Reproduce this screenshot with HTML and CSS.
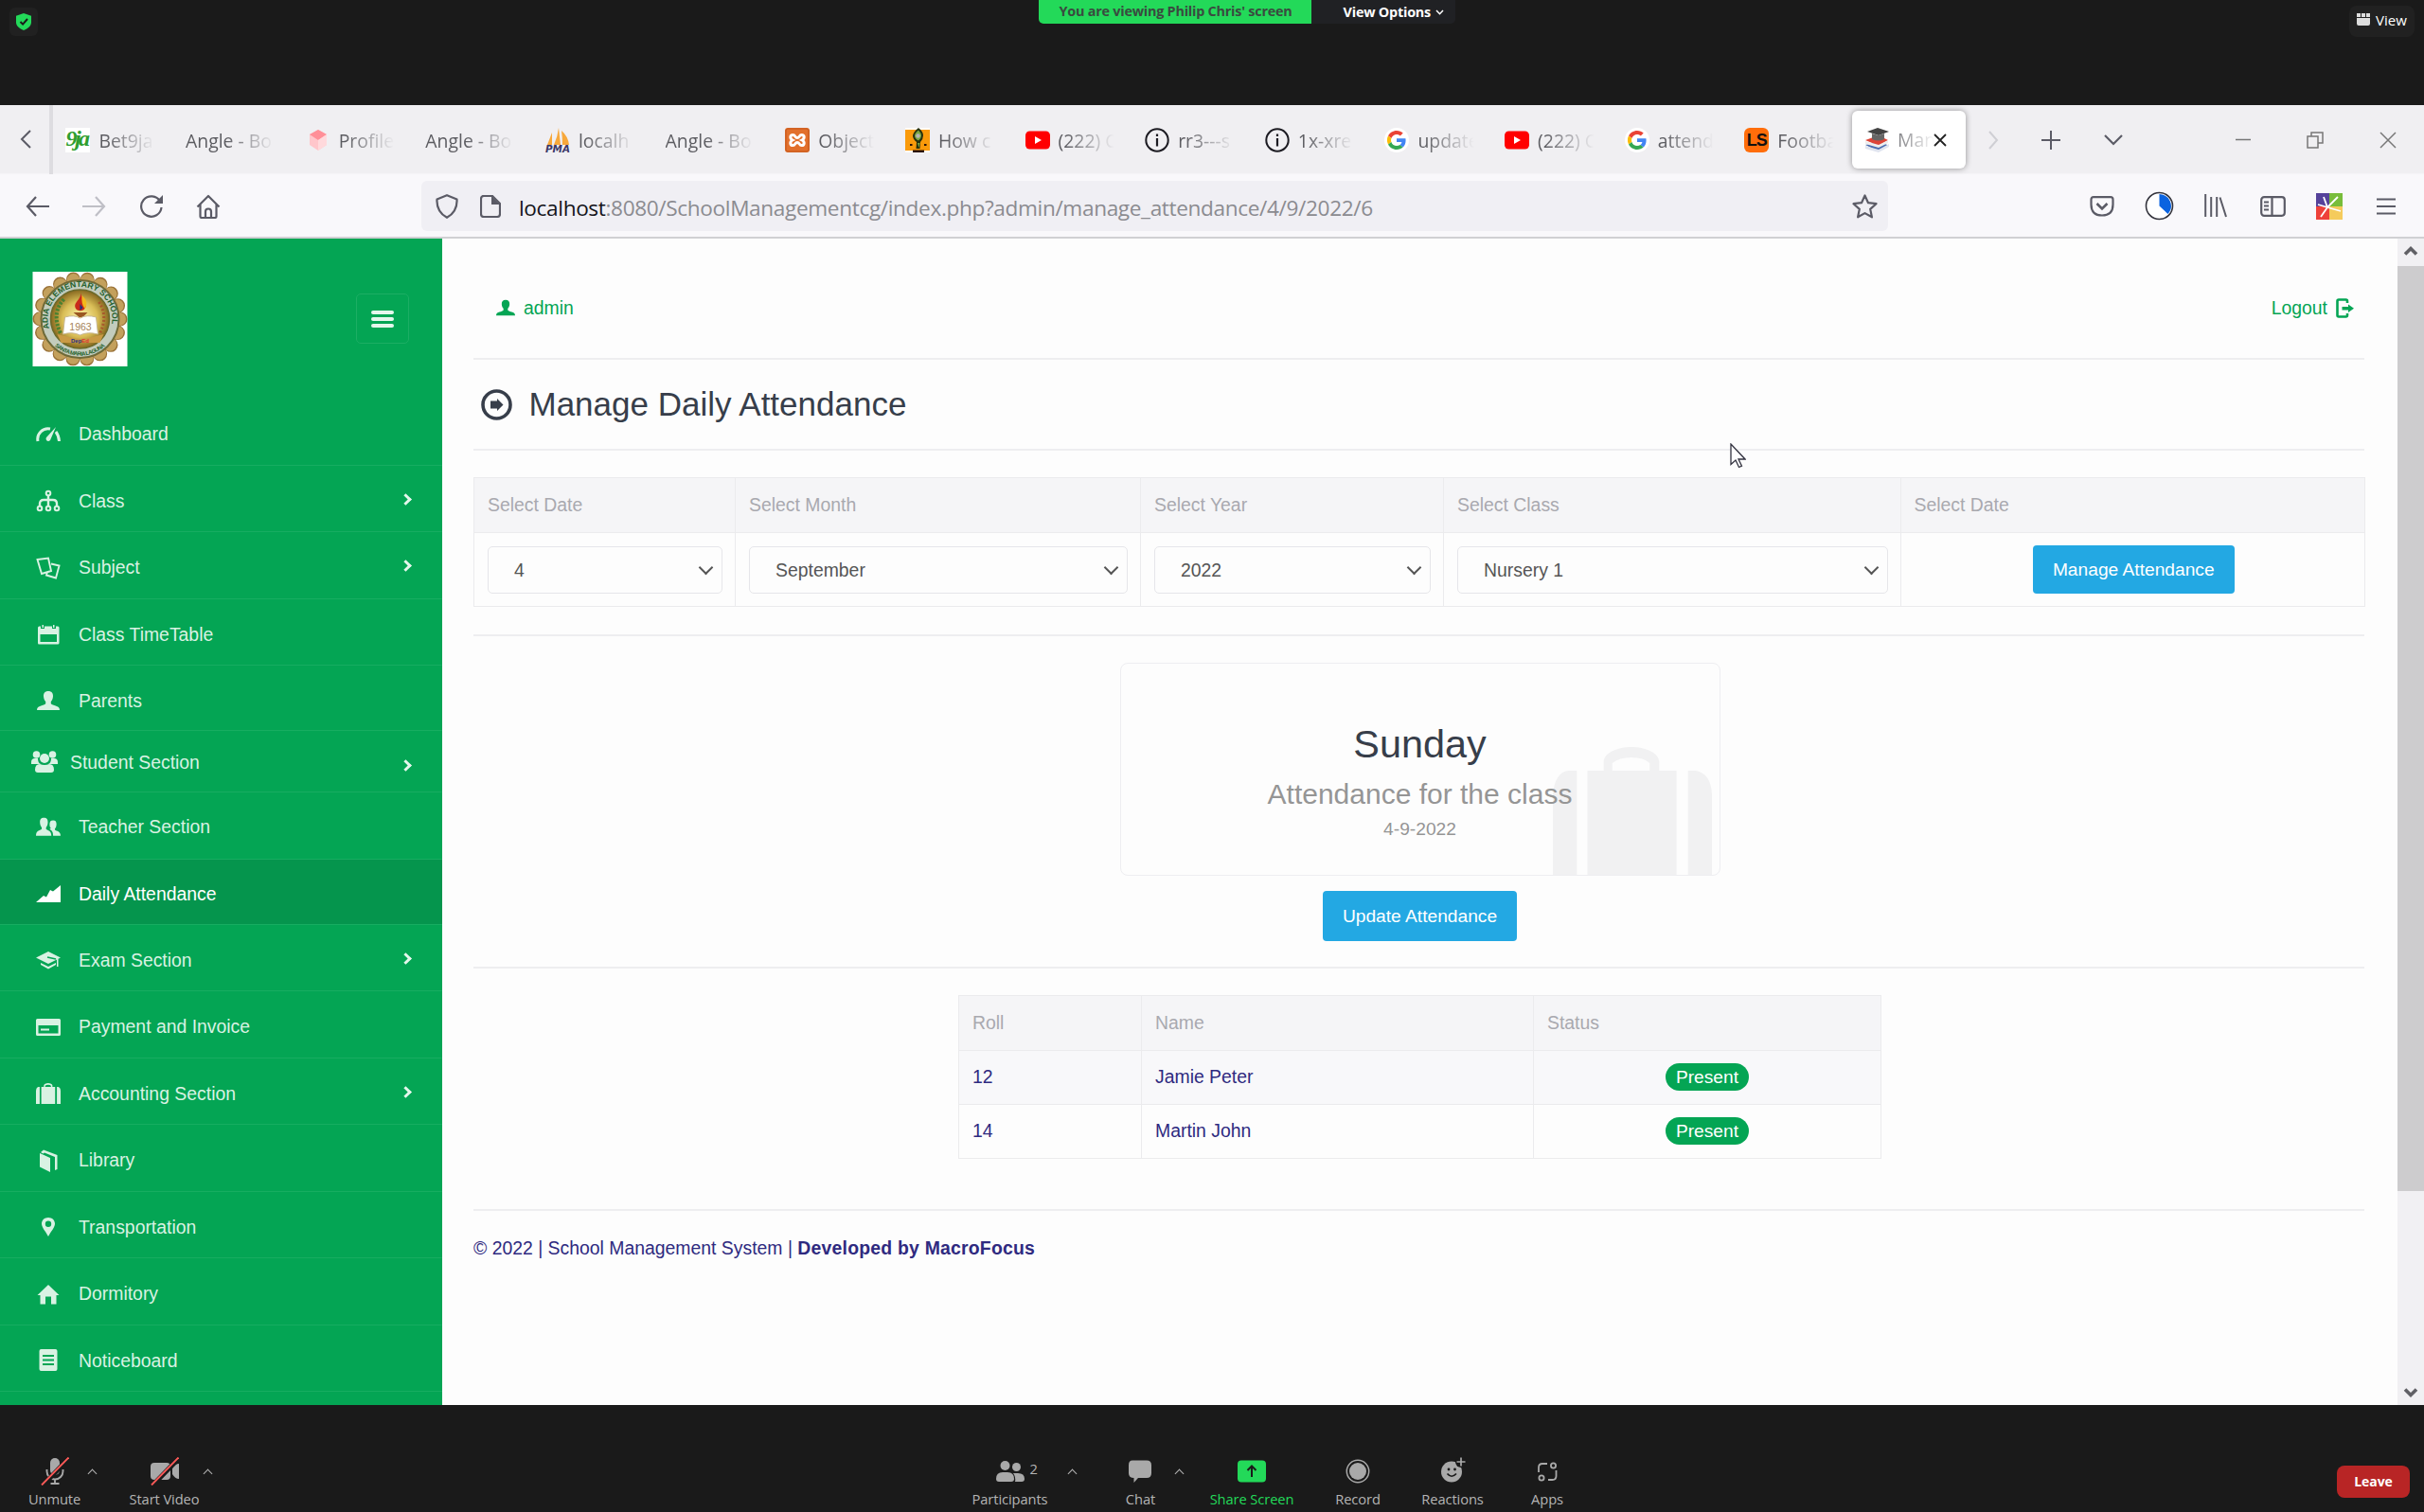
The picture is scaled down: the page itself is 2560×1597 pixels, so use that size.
FILE: index.html
```html
<!DOCTYPE html>
<html lang="en">
<head>
<meta charset="utf-8">
<title>Manage Daily Attendance</title>
<link rel="stylesheet" href="styles.css">
</head>
<body>
<svg class="defs" aria-hidden="true">
  <symbol id="google" viewBox="0 0 48 48"><path fill="#ea4335" d="M24 9.500c3.500 0 6.700 1.200 9.200 3.600l6.900-6.900C35.900 2.400 30.500 0 24 0 14.600 0 6.500 5.400 2.600 13.200l8 6.200C12.400 13.700 17.700 9.500 24 9.500z"/><path fill="#4285f4" d="M47 24.500c0-1.600-.2-3.100-.4-4.500H24v9h12.900c-.6 3-2.300 5.500-4.800 7.200l7.700 6C44.400 38 47 31.800 47 24.500z"/><path fill="#fbbc05" d="M10.500 28.600a14.500 14.500 0 0 1 0-9.200l-8-6.200a24 24 0 0 0 0 21.600z"/><path fill="#34a853" d="M24 48c6.500 0 11.900-2.100 15.900-5.800l-7.700-6c-2.200 1.500-4.900 2.300-8.200 2.300-6.300 0-11.600-4.200-13.500-9.900l-8 6.200C6.500 42.600 14.600 48 24 48z"/></symbol>
  <symbol id="youtube" viewBox="0 0 26 26"><rect y="3.500" width="26" height="19" rx="4.500" fill="#f00"/><path d="M10 9v8l7-4z" fill="#fff"/></symbol>
  <symbol id="info" viewBox="0 0 26 26"><circle cx="13" cy="13" r="11.700" fill="none" stroke="#1c1b22" stroke-width="2"/><path d="M13 11v8.500M13 6.500v2.600" stroke="#1c1b22" stroke-width="2.200"/></symbol>
  <symbol id="user" viewBox="0 0 24 24"><path d="M12 2c3.500 0 5.200 2.100 5 5.500-.2 2.600-1 4.500-2.200 5.500v2.200c1 1 3 1.500 5 2.300 2.600 1 4.200 1.700 4.200 4.500H0c0-2.800 1.600-3.500 4.200-4.500 2-.8 4-1.300 5-2.300V13C8 12 7.200 10.100 7 7.500 6.800 4.100 8.500 2 12 2z"/></symbol>
  <symbol id="bag" viewBox="0 0 166 135" preserveAspectRatio="none"><path d="M0 135V50Q2 27 16 25h9v110zM36 135V25h17V16C53 6 68 0 82 0s29 6 29 16v9h18v110zM62 25h39v-8q-6-6-19-6t-20 6zM141 25h8q16 3 17 25v85h-25z" fill-rule="evenodd"/></symbol>
</svg>

<header class="zoom-top">
  <span class="secure"><svg width="16" height="18" viewBox="0 0 16 18"><path d="M8 0l8 2.800v6.700c0 4-3.500 6.800-8 8.500-4.500-1.700-8-4.500-8-8.500V2.800z" fill="#23d959"/><path d="M4.500 9l2.600 2.600L12 6" fill="none" stroke="#1a1a1a" stroke-width="2"/></svg></span>
  <div class="share-bar">
    <span class="viewing">You are viewing Philip Chris' screen</span>
    <span class="options">View Options <svg width="9" height="6" viewBox="0 0 9 6"><path d="M1 1l3.500 3.700L8 1" fill="none" stroke="#fff" stroke-width="1.500"/></svg></span>
  </div>
  <span class="view-btn"><svg width="14" height="13" viewBox="0 0 14 13" fill="#ddd"><path d="M0 0h4v4H0zM5 0h4v4H5zM10 0h4v4h-4zM0 5h14v6q0 2-2 2H2q-2 0-2-2z"/></svg>View</span>
</header>

<section class="browser">
  <nav class="tabs">
    <span class="scroll-left"><svg width="14" height="22" viewBox="0 0 14 22"><path d="M12 2L3 11l9 9" fill="none" stroke="#5b5b66" stroke-width="2"/></svg></span>
    <div class="tab"><span class="ico nineja">9ja</span><span class="label">Bet9ja</span></div>
    <div class="tab"><span class="label">Angle - Bo</span></div>
    <div class="tab"><svg class="ico" viewBox="0 0 26 26"><path d="M13 2l9 5v11l-9 6-9-6V7z" fill="#ffc6cb"/><path d="M13 2l9 5-9 6-9-6z" fill="#ff8f98"/><path d="M13 13l9-6v11l-9 6z" fill="#ffd9dc"/></svg><span class="label">Profile</span></div>
    <div class="tab"><span class="label">Angle - Bo</span></div>
    <div class="tab"><svg class="ico pma" viewBox="0 0 26 26"><path d="M7 5L2 18h5zM14 0q-1 9-5 18h7zM17 3q7 6 8 15h-7q0-8-1-15z" fill="#f7a83b"/><text x="0" y="26" textLength="26" lengthAdjust="spacingAndGlyphs" class="pma-text">PMA</text></svg><span class="label">localh</span></div>
    <div class="tab"><span class="label">Angle - Bo</span></div>
    <div class="tab"><svg class="ico" viewBox="0 0 26 26"><rect width="26" height="26" rx="3" fill="#e2702c"/><rect x="1" y="1" width="24" height="24" rx="2" fill="none" stroke="#c4571c"/><path d="M8.500 7.500c-3.500 0-3.500 4-.5 5.500-3 1.500-3 5.500.5 5.500 2.500 0 2-3 4.500-3s2 3 4.500 3c3.500 0 3.500-4 .5-5.500 3-1.500 3-5.500-.5-5.500-2.500 0-2 3-4.500 3s-2-3-4.500-3z" fill="none" stroke="#fff" stroke-width="3"/></svg><span class="label">Object</span></div>
    <div class="tab"><svg class="ico" viewBox="0 0 26 26"><path d="M0 0h26v26H0z" fill="#fff"/><path d="M0 2h26v22H0z" fill="#fa9a0a"/><path d="M14 0q5 4 5 8t-3 7l-.5 7h-4l.5-7q-4-3-4-7 1-4 6-8z" fill="#26300f"/><path d="M14 2.500q3 3 3 6t-3 5q-4-2-4-5t4-6zM13 16h2.500l-1 5z" fill="#7aa845"/><circle cx="13.500" cy="8.500" r="2.200" fill="#b5b5b5"/><path d="M5 17h2.500v2H5zM20 17h2.500v2H20zM8 23.500h12V26H8z" fill="#2a1208"/></svg><span class="label">How c</span></div>
    <div class="tab"><svg class="ico"><use href="#youtube"/></svg><span class="label">(222) C</span></div>
    <div class="tab"><svg class="ico"><use href="#info"/></svg><span class="label">rr3---s</span></div>
    <div class="tab"><svg class="ico"><use href="#info"/></svg><span class="label">1x-xre</span></div>
    <div class="tab"><span class="ico disc"><svg width="20" height="20"><use href="#google"/></svg></span><span class="label">update</span></div>
    <div class="tab"><svg class="ico"><use href="#youtube"/></svg><span class="label">(222) C</span></div>
    <div class="tab"><span class="ico disc"><svg width="20" height="20"><use href="#google"/></svg></span><span class="label">attend</span></div>
    <div class="tab"><span class="ico livescore">LS</span><span class="label">Footba</span></div>
    <div class="tab active"><svg class="ico" viewBox="0 0 26 26"><path d="M1 18l15-4 10 5-11 6z" fill="#4a6db0"/><path d="M1 19l14 4 11-6v3l-11 6L1 22z" fill="#dfe4ef"/><path d="M1 13l14-5 10 5-10 6z" fill="#dd4438"/><path d="M1 14l14 4 10-5v3l-10 5-14-4z" fill="#eee"/><path d="M3 4l11-4 12 4-11 4z" fill="#444"/><path d="M8 6v6q7 3 13 0V6l-6 2z" fill="#666"/></svg><span class="label">Man</span><svg class="close" width="14" height="14" viewBox="0 0 14 14"><path d="M1 1l12 12M13 1L1 13" stroke="#222" stroke-width="1.800"/></svg></div>
    <span class="tab-tools">
      <svg width="12" height="20" viewBox="0 0 12 20"><path d="M2 1l8 9-8 9" fill="none" stroke="#cfcfd4" stroke-width="2"/></svg>
      <svg width="20" height="20" viewBox="0 0 20 20"><path d="M10 0v20M0 10h20" stroke="#5b5b66" stroke-width="2"/></svg>
      <svg width="22" height="14" viewBox="0 0 22 14"><path d="M2 2l9 9 9-9" fill="none" stroke="#5b5b66" stroke-width="2.200"/></svg>
    </span>
    <span class="win-tools">
      <svg width="16" height="18" viewBox="0 0 16 18"><path d="M0 8.500h16" stroke="#777" stroke-width="1.500"/></svg>
      <svg width="18" height="18" viewBox="0 0 18 18" fill="none" stroke="#777" stroke-width="1.500"><path d="M1 5h11v12H1zM5 5V1h12v11h-5"/></svg>
      <svg width="18" height="18" viewBox="0 0 18 18"><path d="M1 1l16 16M17 1L1 17" stroke="#777" stroke-width="1.500"/></svg>
    </span>
  </nav>

  <div class="toolbar">
    <div class="nav-icons">
      <svg width="25" height="22" viewBox="0 0 25 22"><path d="M25 11H2M11 1L2 11l9 10" fill="none" stroke="#5b5b66" stroke-width="2.200"/></svg>
      <svg width="25" height="22" viewBox="0 0 25 22"><path d="M0 11h23M14 1l9 10-9 10" fill="none" stroke="#bfbfc6" stroke-width="2.200"/></svg>
      <svg width="25" height="26" viewBox="0 0 25 26"><path d="M22 7.500A10.700 10.700 0 1 0 23.500 14" fill="none" stroke="#5b5b66" stroke-width="2.200"/><path d="M25 1v9h-9z" fill="#5b5b66"/></svg>
      <svg width="26" height="26" viewBox="0 0 26 26" fill="none" stroke="#5b5b66" stroke-width="2.200" stroke-linejoin="round"><path d="M1.500 13.500L13 2l11.500 11.500M4.500 11v12.500q0 1.500 1.500 1.500h14q1.500 0 1.500-1.500V11M10 25v-6.500q0-3 3-3t3 3V25"/></svg>
    </div>
    <div class="url">
      <svg width="24" height="26" viewBox="0 0 24 26"><path d="M12 1.200l10.500 4.300c.5 8-3 15-10.500 19.300C4.500 20.500 1 13.500 1.500 5.500z" fill="none" stroke="#5b5b66" stroke-width="2.200" stroke-linejoin="round"/></svg>
      <svg width="22" height="24" viewBox="0 0 22 24"><path d="M4 1h9l8 8v11q0 3-3 3H4q-3 0-3-3V4q0-3 3-3z" fill="none" stroke="#5b5b66" stroke-width="2.200"/><path d="M12 1v9h9z" fill="#5b5b66"/></svg>
      <span class="address"><b>localhost</b>:8080/SchoolManagementcg/index.php?admin/manage_attendance/4/9/2022/6</span>
      <svg class="star" width="27" height="26" viewBox="0 0 27 26"><path d="M13.500 1.500l3.500 7.700 8.500 1-6.300 5.700 1.700 8.400-7.400-4.200-7.400 4.200 1.700-8.400L1.500 10.200l8.500-1z" fill="none" stroke="#5b5b66" stroke-width="2.200" stroke-linejoin="round"/></svg>
    </div>
    <div class="ext-icons">
      <svg width="26" height="22" viewBox="0 0 26 22" fill="none" stroke="#5b5b66" stroke-width="2.200"><path d="M4 1.200h18q2.500 0 2.500 2.500V9q0 11.500-11.500 11.500T1.500 9V3.700q0-2.500 2.500-2.500z"/><path d="M7.500 8l5.500 5.500L18.500 8" stroke-width="2.600"/></svg>
      <svg width="31" height="31" viewBox="0 0 31 31"><circle cx="15.500" cy="15.500" r="14" fill="#fff" stroke="#33333c" stroke-width="1.600"/><path d="M15.500 3a12.500 12.500 0 0 1 9 21l-9-8.500z" fill="#0a63e0"/></svg>
      <svg width="24" height="25" viewBox="0 0 24 25"><path d="M1.200 0v24M7.200 3v21M13.200 3v21M16.500 3.500L23 24" fill="none" stroke="#5b5b66" stroke-width="2"/></svg>
      <svg width="27" height="22" viewBox="0 0 27 22" fill="none" stroke="#5b5b66" stroke-width="2.200"><rect x="1.200" y="1.200" width="24.600" height="19.600" rx="3"/><path d="M12.500 1v20M4 6.500h5M4 10.500h5M4 14.500h5"/></svg>
      <svg width="28" height="28" viewBox="0 0 28 28"><path d="M0 0h14v14H0z" fill="#55429a"/><path d="M14 0h14v14H14z" fill="#78bd3a"/><path d="M0 14h14v14H0z" fill="#ee413a"/><path d="M14 14h14v14H14z" fill="#f5cb5c"/><path d="M12 15L23 4M12 15L8 4M12 15L2 12M12 15l14 4M12 15L5 25" stroke="#fff" stroke-width="1.800"/></svg>
      <svg width="20" height="18" viewBox="0 0 20 18"><path d="M0 1.500h20M0 9h20M0 16.500h20" stroke="#5b5b66" stroke-width="2.200"/></svg>
    </div>
  </div>

  <div class="page">
    <aside class="sidebar">
      <div class="brand">
        <svg class="logo" viewBox="0 0 100 100">
          <defs>
            <radialGradient id="gold"><stop offset="0" stop-color="#fff6ae"/><stop offset=".6" stop-color="#d9bd56"/><stop offset="1" stop-color="#86671f"/></radialGradient>
            <path id="arc-top" d="M17.500 60A34 34 0 1 1 82.500 60"/>
            <path id="arc-bottom" d="M22 77A39.500 39.500 0 0 0 78 77"/>
          </defs>
          <path d="M0 0h100v100H0z" fill="#fff"/>
          <circle cx="50" cy="50" r="42.500" fill="none" stroke="#9a7238" stroke-width="15" stroke-linecap="round" stroke-dasharray="0 14.835"/>
          <circle cx="50" cy="50" r="41.500" fill="none" stroke="#c3a05c" stroke-width="14" stroke-linecap="round" stroke-dasharray="0 14.486"/>
          <circle cx="50" cy="50" r="41" fill="#c3ccbd" stroke="#6f6a38" stroke-width="2"/>
          <circle cx="50" cy="50" r="31" fill="url(#gold)" stroke="#6b6a2b" stroke-width="1.500"/>
          <text class="seal"><textPath href="#arc-top" textLength="122" lengthAdjust="spacingAndGlyphs">ADIA ELEMENTARY SCHOOL</textPath></text>
          <text class="seal small"><textPath href="#arc-bottom" startOffset="2" textLength="58">SANTA MARIA LAGUNA</textPath></text>
          <path d="M33 29q-14 15-3 37" fill="none" stroke="#4c8030" stroke-width="4" stroke-dasharray="2.500 1.500"/>
          <path d="M70 32q10 15 1 33" fill="none" stroke="#a75a2c" stroke-width="3" stroke-dasharray="2 2"/>
          <path d="M51 22c0 6 6 8 5 15-1 5-9 6-11 1-2-6 6-8 6-16z" fill="#c92a1b"/><path d="M52 25q8 7 3 14-4-5-3-14z" fill="#f3b81c"/><path d="M50 34l3 4-3 3z" fill="#20307e"/>
          <path d="M43 43h15l-5 5h-4z" fill="#9a5722"/>
          <path d="M34 48q10-3 16 1 7-4 17-1l2 18q-11-3-19 1-8-4-18-1z" fill="#fff" stroke="#c6b58e"/>
          <text x="50.500" y="62" text-anchor="middle" class="year">1963</text>
          <path d="M26 66l8 2q16 6 33 0l8-2-4 9H30z" fill="#c99a45"/>
          <text x="50" y="74.500" text-anchor="middle" class="deped">Dep<tspan fill="#d33">Ed</tspan></text>
        </svg>
        <span class="menu-btn"><i></i><i></i><i></i></span>
      </div>
      <ul class="menu">
        <li><svg viewBox="0 0 26 24"><path d="M2 19A11 11 0 0 1 15 6M21 9q3 4 3.500 10" fill="none" stroke="currentColor" stroke-width="3"/><path d="M21 4l-6 14q-2 2-4 0-1-2 0-3z"/></svg><span>Dashboard</span></li>
        <li><svg viewBox="0 0 26 24" fill="none" stroke="currentColor" stroke-width="2"><circle cx="13" cy="4" r="2.300"/><circle cx="4" cy="20" r="2.300"/><circle cx="13" cy="20" r="2.300"/><circle cx="22" cy="20" r="2.300"/><path d="M13 6v12M4 18v-3q0-4 4-4h10q4 0 4 4v3" stroke-width="2.400"/></svg><span>Class</span><b></b></li>
        <li><svg viewBox="0 0 26 24" fill="none" stroke="currentColor" stroke-width="1.900"><path d="M1.500 3L13 1.500 16 15 6 18zM16 7.500l8.500 2L21 22.500l-10-3 1-3"/></svg><span>Subject</span><b></b></li>
        <li><svg viewBox="0 0 26 24"><path d="M2 5q0-1.500 1.500-1.500H5V6h4V3.500h8V6h4V3.500h2q1.500 0 1.500 1.500v16q0 1.500-1.500 1.500h-20Q2 22.500 2 21zM4.500 12v8h17.500v-8zM6.500 2h1.500v3H6.500zM18 2h1.500v3H18z" fill-rule="evenodd"/></svg><span>Class TimeTable</span></li>
        <li class="parents"><svg viewBox="0 0 24 24"><use href="#user"/></svg><span>Parents</span></li>
        <li class="student"><svg viewBox="0 0 28 24"><circle cx="5.500" cy="4" r="3.800"/><circle cx="22.500" cy="4" r="3.800"/><circle cx="14" cy="8" r="5"/><path d="M0 12q0-4 4-4h3q0 5 3 6H0zM28 12q0-4-4-4h-3q0 5-3 6h10zM4 20q0-6 5-6 5 2 10 0 5 0 5 6 0 3-3 3H7q-3 0-3-3z"/></svg><span>Student Section</span><b></b></li>
        <li class="teacher"><svg viewBox="0 0 28 24"><path d="M9 2c3.500 0 4.500 2 4.500 5s-1 5-2 6v2c2 2 6 1.500 6 7.500H0c0-6 4-5.500 6.500-7.500v-2c-1-1-2-3-2-6s1-5 4.500-5zM19.500 5c3 0 3.800 1.800 3.800 4.300s-.8 4.200-1.800 5v1.500c2 1.500 6.500 1.500 6.500 6.700h-8.500c0-5-2-6-4-7.500l1.500-1c-1-1-1.500-2.300-1.500-4.700C15.500 6.800 16.500 5 19.500 5z"/></svg><span>Teacher Section</span></li>
        <li class="current"><svg viewBox="0 0 26 24"><path d="M0 21l8-7 3 1.500L15 8l3 1.500L26 3v18z"/></svg><span>Daily Attendance</span></li>
        <li><svg viewBox="0 0 26 24"><path d="M13 3l13 6.500-2.500 1.200V19H22v-7.500L13 16 0 9.500z"/><path d="M5 15l8 4 8-4v2l-8 4.500L5 17z"/><path d="M12 9l9 2" stroke="#04a554" stroke-width="1.500"/></svg><span>Exam Section</span><b></b></li>
        <li><svg viewBox="0 0 26 24"><path d="M1.500 3h23Q26 3 26 4.500v15q0 1.500-1.500 1.500h-23Q0 21 0 19.500v-15Q0 3 1.500 3zM2.500 10v8.500h21V10zM5 13.500h9v2H5z" fill-rule="evenodd"/></svg><span>Payment and Invoice</span></li>
        <li><svg class="bag-sm"><use href="#bag"/></svg><span>Accounting Section</span><b></b></li>
        <li><svg viewBox="0 0 26 24"><path d="M4 4l11 5v15L4 18.500zM5 3l3-2.500L22.500 6v15L20 22V8L9 3.500 7.500 4.500z"/></svg><span>Library</span></li>
        <li><svg viewBox="0 0 26 24"><path d="M13 2c4 0 7 2.800 7 6.500 0 4-4.500 8.500-7 13.500-2.500-5-7-9.500-7-13.500C6 4.800 9 2 13 2zm0 3.500a3.200 3.200 0 1 0 0 6.400 3.200 3.200 0 0 0 0-6.400z" fill-rule="evenodd"/></svg><span>Transportation</span></li>
        <li><svg viewBox="0 0 26 24"><path d="M13 2l11.500 11h-3v9.500H16v-8h-6v8H4.500V13h-3z"/></svg><span>Dormitory</span></li>
        <li><svg viewBox="0 0 26 24"><path d="M5.500 0h15q2 0 2 2v19q0 2-2 2h-15q-2 0-2-2V2q0-2 2-2zM7 6v2h12V6zM7 10.500v2h12v-2zM7 15v2h12v-2z" fill-rule="evenodd"/></svg><span>Noticeboard</span></li>
      </ul>
    </aside>

    <main>
      <div class="topline">
        <span class="admin"><svg width="20" height="20" viewBox="0 0 24 24"><use href="#user"/></svg>admin</span>
        <span class="logout">Logout<svg width="19" height="21" viewBox="0 0 19 21"><path d="M12 5V3q0-1.500-1.500-1.500H3Q1.500 1.500 1.500 3v15q0 1.500 1.500 1.500h7.500Q12 19.500 12 18v-2" fill="none" stroke="#04a554" stroke-width="2.600"/><path d="M6.500 9h6.500V6.500l6 4.200-6 4.300v-2.500H6.500z" fill="#04a554"/></svg></span>
      </div>
      <h1><svg width="33" height="33" viewBox="0 0 33 33"><circle cx="16.500" cy="16.500" r="14.500" fill="none" stroke="#373e4a" stroke-width="3.600"/><path d="M10 12.500h7V10l6.500 6.500L17 23v-2.500h-7z" fill="#373e4a"/></svg>Manage Daily Attendance</h1>

      <table class="filters">
        <colgroup><col class="c1"><col class="c2"><col class="c3"><col class="c4"><col></colgroup>
        <tr><th>Select Date</th><th>Select Month</th><th>Select Year</th><th>Select Class</th><th>Select Date</th></tr>
        <tr>
          <td><div class="select">4</div></td>
          <td><div class="select">September</div></td>
          <td><div class="select">2022</div></td>
          <td><div class="select">Nursery 1</div></td>
          <td class="center"><span class="btn">Manage Attendance</span></td>
        </tr>
      </table>

      <section class="summary">
        <div class="tile">
          <svg class="tile-icon" width="168" height="135"><use href="#bag"/></svg>
          <h2>Sunday</h2>
          <h3>Attendance for the class</h3>
          <p>4-9-2022</p>
        </div>
        <span class="btn">Update Attendance</span>
      </section>

      <table class="roll">
        <colgroup><col class="r1"><col class="r2"><col></colgroup>
        <tr><th>Roll</th><th>Name</th><th>Status</th></tr>
        <tr class="odd"><td>12</td><td>Jamie Peter</td><td class="center"><span class="badge">Present</span></td></tr>
        <tr><td>14</td><td>Martin John</td><td class="center"><span class="badge">Present</span></td></tr>
      </table>

      <footer>© 2022 | School Management System | <strong>Developed by MacroFocus</strong></footer>
    </main>

    <div class="scrollbar">
      <svg width="16" height="12" viewBox="0 0 16 12"><path d="M2 9.500l6-6 6 6" fill="none" stroke="#606065" stroke-width="3.600"/></svg>
      <span class="thumb"></span>
      <svg width="16" height="12" viewBox="0 0 16 12"><path d="M2 2.500l6 6 6-6" fill="none" stroke="#606065" stroke-width="3.600"/></svg>
    </div>

    <svg class="cursor" width="17" height="27" viewBox="0 0 17 27"><path d="M1 1v21.500l5-4.500 3.500 7.500 3-1.400L9 17h7z" fill="#fff" stroke="#333340" stroke-width="1.300"/></svg>
  </div>
</section>

<footer class="zoom-bar">
  <div class="tool unmute"><svg width="30" height="30" viewBox="0 0 30 30"><rect x="10" y="1" width="10" height="18" rx="5" fill="#a9a9a9"/><path d="M6.500 13v2a8.500 8.500 0 0 0 17 0v-2M15 23.500V28M10.500 28h9" fill="none" stroke="#a9a9a9" stroke-width="1.900"/><path d="M2 30L31 0" stroke="#1a1a1a" stroke-width="5"/><path d="M1 29.500L29.500 .5" stroke="#ff5a58" stroke-width="1.900"/></svg>Unmute</div>
  <span class="caret c-a"></span>
  <div class="tool video"><svg width="30" height="30" viewBox="0 0 30 30"><rect y="6" width="21" height="18" rx="4" fill="#a9a9a9"/><path d="M23 12q3-5 7-5v16q-4 0-7-5z" fill="#a9a9a9"/><path d="M2 30L31 0" stroke="#1a1a1a" stroke-width="5"/><path d="M1 29.500L29.500 .5" stroke="#ff5a58" stroke-width="1.900"/></svg>Start Video</div>
  <span class="caret c-b"></span>
  <div class="tool participants"><svg width="30" height="30" viewBox="0 0 30 30" fill="#a9a9a9"><circle cx="9.500" cy="9" r="5"/><circle cx="21.500" cy="10.500" r="4.500"/><path d="M0 23q0-7 7-7h5q7 0 7 7 0 3-3 3H3q-3 0-3-3zM18 17h5q7 0 7 6 0 3-3 3h-7q1-5-2-9z"/></svg><em>2</em>Participants</div>
  <span class="caret c-c"></span>
  <div class="tool chat"><svg width="30" height="30" viewBox="0 0 30 30"><path d="M6 3.500h15q5 0 5 5V17q0 5-5 5h-9l-4.500 5v-5Q2 22 2 17V8.500q0-5 4-5z" fill="#a9a9a9"/></svg>Chat</div>
  <span class="caret c-d"></span>
  <div class="tool share"><svg width="30" height="30" viewBox="0 0 30 30"><rect y="3.500" width="30" height="23" rx="4" fill="#23d959"/><path d="M15 21V10M10.500 14L15 9.500l4.500 4.500" fill="none" stroke="#1a1a1a" stroke-width="2"/></svg>Share Screen</div>
  <div class="tool record"><svg width="30" height="30" viewBox="0 0 30 30"><circle cx="15" cy="15" r="11.700" fill="none" stroke="#a9a9a9" stroke-width="1.500"/><circle cx="15" cy="15" r="9" fill="#a9a9a9"/></svg>Record</div>
  <div class="tool reactions"><svg width="30" height="30" viewBox="0 0 30 30"><circle cx="14" cy="15.500" r="11" fill="#a9a9a9"/><circle cx="24" cy="5" r="6" fill="#1a1a1a"/><path d="M24 .5v9M19.500 5h9" stroke="#a9a9a9" stroke-width="1.700"/><circle cx="11" cy="13" r="1.400" fill="#1a1a1a"/><circle cx="17.500" cy="13" r="1.400" fill="#1a1a1a"/><path d="M9.500 17.500q4.500 5.500 9.500 0" fill="none" stroke="#1a1a1a" stroke-width="1.700"/></svg>Reactions</div>
  <div class="tool apps"><svg width="30" height="30" viewBox="0 0 30 30" fill="none" stroke="#a9a9a9" stroke-width="1.800"><path d="M6 16v-5q0-4 4-4h5M24.500 14v6q0 4-4 4H16"/><circle cx="21.500" cy="9" r="2.600"/><circle cx="9" cy="22" r="2.600"/></svg>Apps</div>
  <span class="leave">Leave</span>
</footer>
</body>
</html>
```
FILE: styles.css
```css
* { box-sizing: border-box; }
body { margin: 0; width: 2560px; height: 1597px; overflow: hidden; background: #1a1a1a; font-family: "Open Sans", sans-serif; display: flex; flex-direction: column; }
svg { display: block; flex: none; }
.defs { position: absolute; width: 0; height: 0; }

/* meeting header */
.zoom-top { height: 111px; position: relative; display: flex; justify-content: space-between; align-items: flex-start; padding: 6px 10px; }
.secure { width: 30px; height: 30px; margin-top: 2px; border-radius: 6px; background: #212121; display: flex; align-items: center; justify-content: center; }
.share-bar { position: absolute; left: 1097px; top: 0; width: 440px; height: 25px; display: flex; border-radius: 0 0 5px 5px; overflow: hidden; font-size: 14.400px; font-weight: 700; line-height: 24px; letter-spacing: -.22px; white-space: nowrap; }
.viewing { width: 288px; padding-left: 1px; background: #23d959; color: #3a4a40; text-align: center; }
.options { flex: 1; background: #202124; color: #fff; display: flex; align-items: center; justify-content: flex-end; gap: 5px; padding-right: 12px; }
.view-btn { display: flex; align-items: center; gap: 6px; width: 69px; height: 33px; padding: 0 8px 4px; border-radius: 8px; background: #212121; color: #fff; font-size: 15px; }

/* browser chrome */
.browser { height: 1373px; display: flex; flex-direction: column; background: #f9f8fb; }
.tabs { height: 73px; background: #f0eff2; display: flex; align-items: center; border-bottom: 1px solid #f5f4f7; padding-top: 2px; }
.scroll-left { width: 56.400px; height: 73px; margin-top: -2px; padding-left: 20px; border-right: 4px solid #dddce0; display: flex; align-items: center; flex: none; }
.tab { width: 126.650px; padding: 0 18px 0 13px; display: flex; align-items: center; gap: 9px; flex: none; height: 61px; }
.ico { width: 26px; height: 26px; flex: none; }
.label { flex: 1; min-width: 0; overflow: hidden; white-space: nowrap; font-size: 19.400px; line-height: 30px; padding-top: 1px; color: #5c5c61; -webkit-mask-image: linear-gradient(90deg, #000 calc(100% - 54px), transparent 98%); mask-image: linear-gradient(90deg, #000 calc(100% - 54px), transparent 98%); }
.nineja { background: #fff; color: #2f9e2f; font: italic bold 24px/22px "Liberation Serif", serif; letter-spacing: -2.500px; }
.pma { overflow: visible; }
.pma-text { font: italic bold 10px "DejaVu Sans", sans-serif; fill: #3b3768; }
.disc { border-radius: 50%; background: #fff; display: flex; align-items: center; justify-content: center; }
.livescore { border-radius: 6px; background: #ff6d0a; color: #111; font: bold 18px/26px "Liberation Sans", sans-serif; text-align: center; letter-spacing: -1px; }
.tab.active { width: 120px; margin-top: -1px; padding: 0 20px 0 13px; background: #fff; border-radius: 6px; box-shadow: 0 0 6px rgba(0,0,0,.4); }
.active .label { margin-right: -6px; -webkit-mask-image: linear-gradient(90deg, rgba(0,0,0,.8), transparent); mask-image: linear-gradient(90deg, rgba(0,0,0,.8), transparent); }
.active .close { margin-left: -4px; }
.tab-tools { display: flex; align-items: center; margin-left: 23px; gap: 45px; }
.win-tools { display: flex; align-items: center; margin-left: auto; padding-right: 29px; gap: 59px; }

.toolbar { height: 68px; display: flex; align-items: center; padding: 0 30px 0 28px; border-bottom: 2px solid #d0d0d3; }
.nav-icons { display: flex; align-items: center; gap: 35px; width: 418px; margin-left: -1px; padding-top: 2px; }
.url { width: 1549px; height: 53px; background: #f0eff4; border-radius: 6px; display: flex; align-items: center; padding: 2px 11px 0 15px; }
.url svg + svg { margin-left: 23px; }
.address { margin-left: 19px; font-size: 22.600px; letter-spacing: -.35px; color: #8b8b90; white-space: nowrap; flex: 1; padding-top: 2px; }
.address b { font-weight: 400; color: #15141a; }
.ext-icons { margin-left: auto; display: grid; grid-template-columns: repeat(6, 60px); justify-items: center; align-items: center; margin-right: -20px; padding-top: 1px; }

.page { height: 1232px; display: flex; background: #fdfdfd; position: relative; overflow: hidden; font-family: "Liberation Sans", Arial, sans-serif; font-size: 19.400px; }

/* sidebar */
.sidebar { width: 467px; background: #04a554; color: #d9f2e3; flex: none; }
.brand { height: 169px; padding: 35px 35px 0 34px; display: flex; justify-content: space-between; }
.logo { width: 101px; height: 100px; }
.seal { font: bold 8.500px "Liberation Sans", sans-serif; fill: #25602c; }
.seal.small { font-size: 6px; }
.year { font: 10.500px "Liberation Sans", sans-serif; fill: #a58258; }
.deped { font: bold 6px "Liberation Sans", sans-serif; fill: #283080; }
.menu-btn { width: 56px; height: 53px; margin-top: 23px; border: 1px solid #1cae64; border-radius: 5px; display: flex; flex-direction: column; justify-content: center; align-items: center; gap: 3px; }
.menu-btn i { width: 24px; height: 4px; border-radius: 2px; background: #e4f7ec; }
.menu { list-style: none; margin: 0; padding: 0; }
.menu li { height: 70.500px; border-bottom: 1.500px solid #17ad61; padding: 6px 31px 0 38px; display: flex; align-items: center; }
.menu svg { width: 26px; height: 24px; fill: currentColor; margin-right: 19px; }
.menu svg[fill="none"] { fill: none; }
.menu .bag-sm { height: 22px; }
.menu span { flex: 1; }
.menu b { width: 9px; height: 9px; border: solid #e4f7ec; border-width: 3px 3px 0 0; transform: translate(-3px, -2px) rotate(45deg); }
.menu .parents { height: 69px; }
.menu .student { height: 64.500px; padding: 3px 31px 0 33px; }
.menu .student svg { width: 28px; margin-right: 13px; }
.menu .student b { transform: translate(-3px, 3px) rotate(45deg); }
.menu .teacher { height: 71.500px; padding-top: 3px; }
.menu .current { height: 68.500px; padding-top: 5px; background: #05954d; color: #fff; }

/* content */
main { flex: 1; min-width: 0; padding: 0 0 0 33px; color: #2f2a80; }
.topline { height: 128px; width: 1997px; border-bottom: 2px solid #eeeef0; display: flex; justify-content: space-between; align-items: center; padding: 20px 11px 0 24px; color: #04a554; }
.admin, .logout { display: flex; align-items: center; gap: 9px; }
.admin svg { fill: #04a554; }
h1 { margin: 0 0 28px; width: 1997px; height: 96px; border-bottom: 2px solid #eeeef0; display: flex; align-items: center; gap: 17.500px; padding-left: 8px; font-size: 35px; font-weight: 400; color: #373e4a; }
table { border-collapse: collapse; table-layout: fixed; }
th, td { border: 1.600px solid #ebebed; padding: 0 14px; text-align: left; font-weight: 400; }
th { background: #f5f5f7; color: #a9a9af; }
.center { text-align: center; }
.filters { width: 1998px; }
.filters th { height: 58px; }
.filters td { height: 78px; }
.filters .center { padding-left: 16px; }
.c1 { width: 276px; } .c2 { width: 428px; } .c3 { width: 320px; } .c4 { width: 482.500px; }
.select { height: 50px; margin: 0 -1px 0 0; border: 1.500px solid #e6e6ea; border-radius: 5px; padding: 2px 10px 0 27px; color: #555; display: flex; align-items: center; justify-content: space-between; }
.select::after { content: ""; width: 9px; height: 9px; border: solid #555; border-width: 0 2.500px 2.500px 0; transform: translate(-1px, -3px) rotate(45deg); }
.btn { display: inline-block; height: 51px; line-height: 51px; padding: 0 21px; border-radius: 4px; background: #23a8e3; color: #fff; font-size: 19.200px; vertical-align: middle; }
.summary { margin-top: 29px; width: 1999px; height: 353px; display: flex; flex-direction: column; align-items: center; padding-top: 30px; gap: 16px; background: linear-gradient(#eeeef0, #eeeef0) 0 0 / 1997px 2px no-repeat, linear-gradient(#eeeef0, #eeeef0) 0 100% / 1997px 2px no-repeat; }
.summary .btn { height: 53px; line-height: 53px; }
.tile { position: relative; width: 634px; height: 225px; border: 1.600px solid #eeeef1; border-radius: 8px; text-align: center; padding-top: 61px; overflow: hidden; }
.tile-icon { position: absolute; right: 8px; bottom: 0; fill: #f1f1f2; }
.tile h2, .tile h3, .tile p { position: relative; margin: 0; font-weight: 400; }
.tile h2 { font-size: 41.400px; line-height: 48px; color: #373e4a; }
.tile h3 { font-size: 30px; line-height: 36px; margin-top: 11px; color: #959595; }
.tile p { font-size: 19.200px; line-height: 24px; margin-top: 7px; color: #959595; }
.roll { width: 975px; margin: 28px 0 0 512px; }
.roll th { height: 57.500px; }
.roll td { height: 57px; }
.r1 { width: 193px; } .r2 { width: 414px; }
.odd { background: #f8f8fa; }
.badge { display: inline-block; height: 29px; line-height: 29px; padding: 0 11px; border-radius: 15px; background: #04a554; color: #fff; font-size: 19.200px; vertical-align: middle; }
main footer { margin-top: 53px; width: 1997px; border-top: 2px solid #eeeef0; padding-top: 27px; line-height: 24px; }
footer strong { letter-spacing: .22px; }

.scrollbar { width: 28px; flex: none; background: #f1f0f3; display: flex; flex-direction: column; align-items: center; justify-content: space-between; padding: 7px 0 7px; }
.thumb { width: 100%; height: 977px; background: #cdccce; margin-bottom: 206px; margin-top: 8px; }
.cursor { position: absolute; left: 1827px; top: 216px; }

/* meeting toolbar */
.zoom-bar { height: 113px; display: flex; align-items: flex-start; padding-top: 55px; color: #b4b4b4; font-size: 14.700px; letter-spacing: -.1px; white-space: nowrap; }
.tool { position: relative; display: flex; flex-direction: column; align-items: center; gap: 3px; line-height: 22px; flex: none; }
.tool em { position: absolute; left: 71px; top: 3px; font-style: normal; line-height: 18px; }
.unmute { width: 80px; margin-left: 17.500px; }
.video { width: 92px; margin-left: 20px; }
.participants { width: 100px; margin-left: 785px; }
.chat { width: 62px; margin-left: 25px; }
.share { width: 100px; margin-left: 16.500px; color: #23d959; }
.record { width: 84px; margin-left: 20px; }
.reactions { width: 84px; margin-left: 16px; }
.apps { width: 60px; margin-left: 28px; }
.caret { height: 30px; display: flex; align-items: center; justify-content: center; width: 20px; flex: none; }
.caret::after { content: ""; width: 6px; height: 6px; border: solid #b4b4b4; border-width: 1.500px 0 0 1.500px; transform: translateY(2px) rotate(45deg); }
.c-a { margin-left: -10px; }
.c-b { margin-left: -13px; width: 25px; }
.c-c { width: 32px; }
.leave { margin: 9px 15px 0 auto; width: 77px; height: 34px; border-radius: 8px; background: #b82525; color: #fff; font-weight: 700; font-size: 14px; line-height: 33px; text-align: center; }
```
